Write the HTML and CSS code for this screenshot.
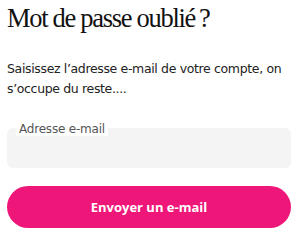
FILE: index.html
```html
<!DOCTYPE html>
<html lang="fr">
<head>
    <meta charset="UTF-8">
    <meta name="viewport" content="width=device-width, initial-scale=1.0">
    <title>Mot de passe oublié</title>
    <link rel="stylesheet" href="styles.css">
</head>
<body>
    <div class="container">
        <h1 class="title">Mot de passe oublié&#8239;?</h1>
        <p class="intro">Saisissez l’adresse e-mail de votre compte, on s’occupe du reste....</p>

        <div class="field">
            <label for="email" class="field-label">Adresse e-mail</label>
            <input type="email" id="email" class="field-input">
        </div>

        <button class="submit">Envoyer un e-mail</button>
    </div>
</body>
</html>
```

FILE: styles.css
```css
body {
    margin: 0;
    background-color: #ffffff;
    color: #222;
    font-family: "DejaVu Sans", Arial, sans-serif;
}
.container {
    padding: 0 9px 0 7px;
}

/* Big serif heading */
.title {
    margin: 0;
    padding-top: 2px;
    font-family: "Liberation Serif", "Times New Roman", serif;
    font-weight: normal;
    font-size: 26.5px;
    letter-spacing: -1.3px;
    line-height: 32px;
    color: #111;
}

.intro {
    margin: 25px 0 0 0;
    font-size: 12.5px;
    letter-spacing: -0.35px;
    line-height: 20px;
    color: #222;
}

.field {
    position: relative;
    margin-top: 29px;
}
.field-label {
    position: absolute;
    left: 9px;
    top: -6px;
    padding: 0 3px;
    background-color: #fff;
    font-size: 12px;
    letter-spacing: -0.2px;
    line-height: 14px;
    color: #555;
}
.field-input {
    display: block;
    box-sizing: border-box;
    width: 100%;
    height: 40px;
    border: none;
    border-radius: 6px;
    background-color: #f4f4f4;
}

.submit {
    display: block;
    width: 100%;
    height: 42px;
    margin-top: 18px;
    border: none;
    border-radius: 21px;
    background-color: #ef1679;
    color: white;
    font-family: "Open Sans", Arial, sans-serif;
    font-weight: 700;
    font-size: 13px;
    cursor: pointer;
}
```
